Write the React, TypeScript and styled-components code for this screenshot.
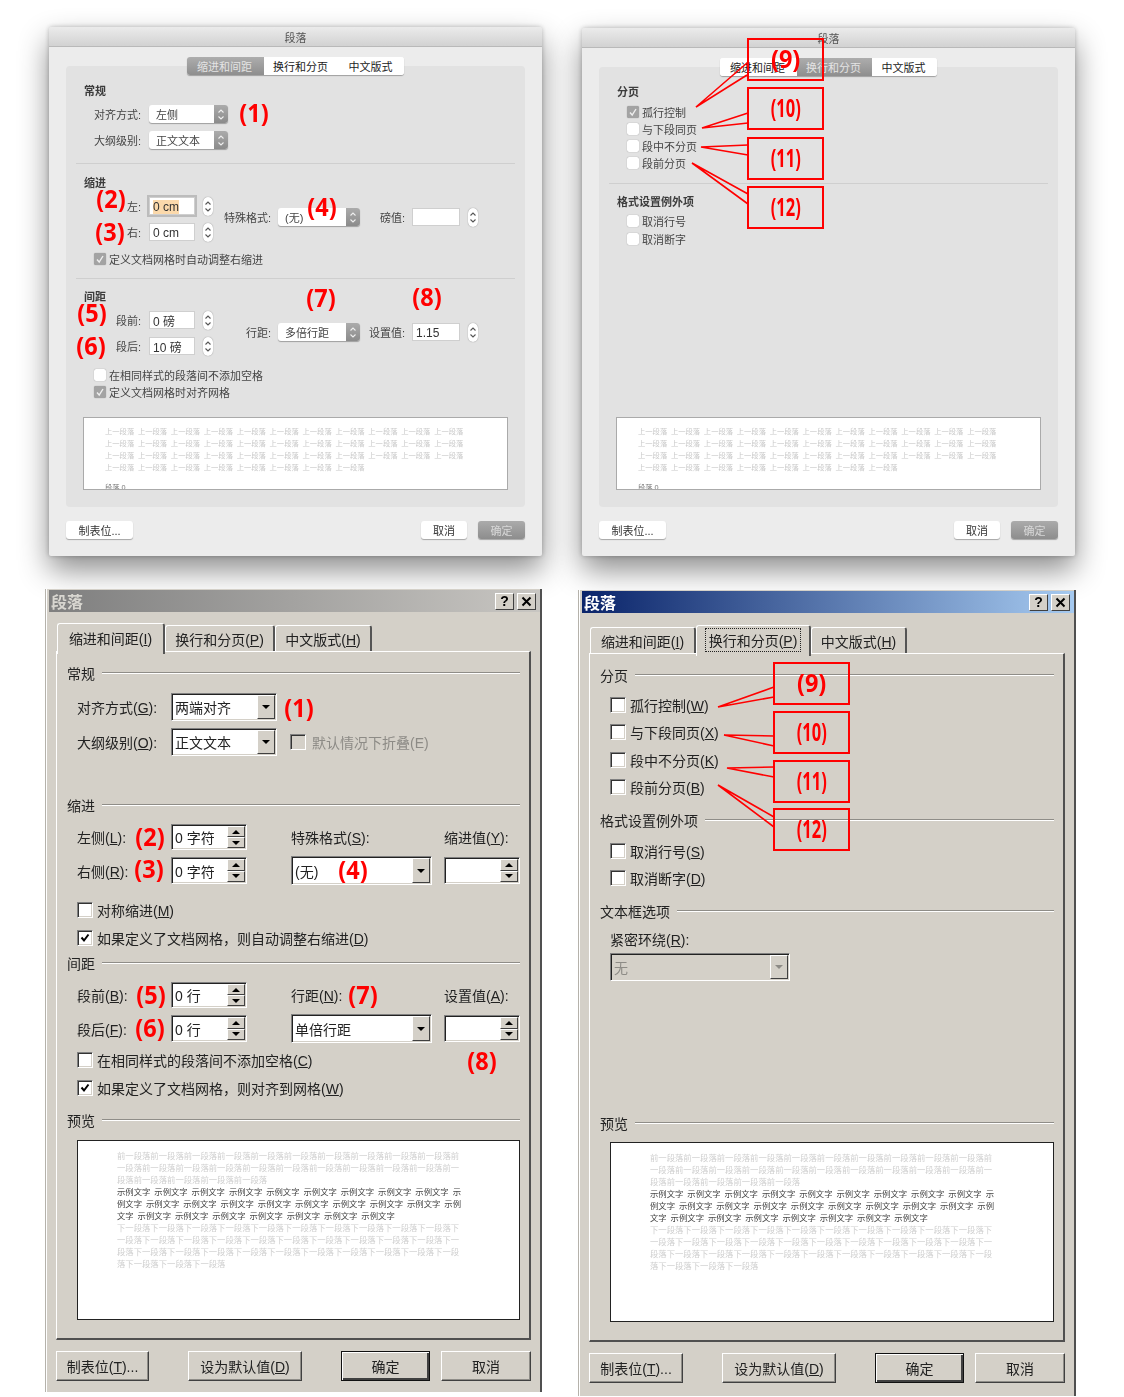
import React from "react";
import styled, { createGlobalStyle } from "styled-components";

const GlobalStyle = createGlobalStyle`
  html, body { margin: 0; padding: 0; background: #fff; }
  body { font-family: "Liberation Sans", "Noto Sans CJK SC", sans-serif; }
  * { box-sizing: border-box; }
`;

const Page = styled.div`
  position: relative;
  width: 1124px;
  height: 1397px;
  overflow: hidden;
  background: #fff;
  padding-top: 27px;
`;

const TopRow = styled.div`
  display: flex;
  align-items: flex-start;
  gap: 40px;
  margin-left: 49px;
`;

const BottomRow = styled.div`
  display: flex;
  align-items: flex-start;
  gap: 36px;
  margin: 33px 0 0 45px;
`;

/* ---- mac dialogs ---- */

const MacDialog = styled.div<{ $top?: number }>`
  width: 493px;
  margin-top: ${(p) => p.$top || 0}px;
  padding-bottom: 17px;
  display: flex;
  flex-direction: column;
  background: #ececec;
  border-radius: 3px 3px 2px 2px;
  box-shadow: 0 14px 30px rgba(0, 0, 0, 0.45), 0 0 5px rgba(0, 0, 0, 0.25);
  filter: blur(0.35px);
  font-size: 11px;
  color: #454545;
`;

const MacTitle = styled.div`
  height: 20px;
  display: flex;
  align-items: center;
  justify-content: center;
  background: linear-gradient(#ebebeb, #d2d2d2);
  border-bottom: 1px solid #b9b9b9;
  border-radius: 3px 3px 0 0;
  color: #555;
`;

const MacTabs = styled.div`
  position: relative;
  z-index: 1;
  align-self: center;
  display: flex;
  height: 18px;
  margin-top: 10px;
  background: #fff;
  border-radius: 3px;
  box-shadow: 0 1px 1px rgba(0, 0, 0, 0.3);
  overflow: hidden;
`;

const MacTab = styled.div<{ $w: number; $active?: boolean }>`
  width: ${(p) => p.$w}px;
  display: flex;
  align-items: center;
  justify-content: center;
  padding: 0 2px 1px 0;
  color: ${(p) => (p.$active ? "#e4e4e4" : "#222")};
  background: ${(p) => (p.$active ? "linear-gradient(#adadad, #8e8e8e)" : "#fff")};
`;

const MacPanel = styled.div`
  margin: -9px 17px 0;
  padding: 18px 10px 17px;
  display: flex;
  flex-direction: column;
  background: #e2e2e2;
  border-radius: 4px;
`;

const MacHead = styled.div<{ $mt?: number }>`
  height: 14px;
  line-height: 14px;
  margin: ${(p) => p.$mt || 0}px 0 0 8px;
  font-weight: 700;
  color: #3c3c3c;
`;

const MacRow = styled.div<{ $mt?: number }>`
  display: flex;
  align-items: center;
  height: 18px;
  margin-top: ${(p) => p.$mt || 0}px;
`;

const MacLabel = styled.span<{ $w: number; $gap: number }>`
  width: ${(p) => p.$w}px;
  margin-right: ${(p) => p.$gap}px;
  padding-bottom: 1px;
  text-align: right;
  white-space: nowrap;
`;

const MacSelectBox = styled.div<{ $w: number }>`
  width: ${(p) => p.$w}px;
  height: 18px;
  display: flex;
  align-items: center;
  justify-content: space-between;
  padding-left: 7px;
  background: #fff;
  border-radius: 3px;
  box-shadow: 0 1px 1px rgba(0, 0, 0, 0.3);
  overflow: hidden;
`;

const MacSelectText = styled.span`
  padding-bottom: 1px;
`;

const MacArrows = styled.div`
  width: 14px;
  height: 18px;
  display: flex;
  align-items: center;
  justify-content: center;
  background: linear-gradient(#ababab, #8b8b8b);
`;

const MacField = styled.div<{ $w: number; $focus?: boolean }>`
  width: ${(p) => p.$w}px;
  height: 18px;
  padding: 1px 0 0 3px;
  display: flex;
  align-items: center;
  background: #fff;
  border: 1px solid #cfcfcf;
  font-size: 12px;
  color: #333;
  box-shadow: ${(p) => (p.$focus ? "0 0 0 2px #bcbcbc" : "none")};
`;

const Highlight = styled.span`
  background: #fbd9ab;
`;

const MacStepper = styled.div`
  width: 10px;
  height: 19px;
  margin-left: 8px;
  display: flex;
  align-items: center;
  justify-content: center;
  background: #fff;
  border-radius: 5px;
  box-shadow: 0 0 1px rgba(0, 0, 0, 0.5);
`;

const MacSplit = styled.div<{ $mt: number }>`
  display: flex;
  align-items: flex-start;
  margin-top: ${(p) => p.$mt}px;
`;

const MacLeftCol = styled.div`
  width: 137px;
  display: flex;
  flex-direction: column;
  gap: 8px;
`;

const MacRightCol = styled.div<{ $mt: number }>`
  margin-top: ${(p) => p.$mt}px;
`;

const MacSep = styled.div<{ $mt: number }>`
  height: 1px;
  margin-top: ${(p) => p.$mt}px;
  background: #cfcfcf;
`;

const MacCheckRow = styled.div<{ $mt: number }>`
  display: flex;
  align-items: center;
  gap: 3px;
  height: 14px;
  margin: ${(p) => p.$mt}px 0 0 18px;
`;

const MacBox = styled.div<{ $on?: boolean }>`
  width: 12px;
  height: 12px;
  display: flex;
  align-items: center;
  justify-content: center;
  border-radius: 2px;
  background: ${(p) => (p.$on ? "#a3a3a3" : "#fff")};
  box-shadow: 0 0 1px rgba(0, 0, 0, 0.45);
`;

const MacPreview = styled.div<{ $mt: number }>`
  width: 425px;
  height: 73px;
  margin: ${(p) => p.$mt}px 0 0 7px;
  padding: 8px 0 0 21px;
  overflow: hidden;
  background: #fff;
  border: 1px solid #aaa;
  font-size: 7.3px;
  line-height: 12px;
`;

const MacPrevText = styled.div`
  width: 366px;
  color: #c9c9c9;
  word-break: keep-all;
  word-spacing: 1.7px;
`;

const MacPrevCurrent = styled.div`
  margin-top: 8px;
  color: #777;
`;

const MacFooter = styled.div`
  display: flex;
  align-items: center;
  gap: 11px;
  margin: 14px 17px 0;
`;

const MacButton = styled.div<{ $w: number; $primary?: boolean; $push?: boolean }>`
  width: ${(p) => p.$w}px;
  height: 18px;
  margin-left: ${(p) => (p.$push ? "auto" : "0")};
  padding-bottom: 1px;
  display: flex;
  align-items: center;
  justify-content: center;
  border-radius: 3px;
  color: ${(p) => (p.$primary ? "#d8d8d8" : "#333")};
  background: ${(p) => (p.$primary ? "linear-gradient(#ababab, #8d8d8d)" : "#fff")};
  box-shadow: 0 1px 1px rgba(0, 0, 0, 0.3);
`;

/* ---- windows dialogs ---- */

const WinDialog = styled.div<{ $w: number; $h: number; $top?: number }>`
  width: ${(p) => p.$w}px;
  height: ${(p) => p.$h}px;
  margin-top: ${(p) => p.$top || 0}px;
  padding: 1px 0 0 3px;
  background: #d4d0c8;
  border-left: 1px solid #b5b2ab;
  border-right: 2px solid #505050;
  box-shadow: inset 1px 0 0 #fff;
  filter: blur(0.25px);
  font-size: 14px;
  color: #222;
`;

const WinTitle = styled.div<{ $active?: boolean }>`
  height: 22px;
  display: flex;
  align-items: center;
  justify-content: space-between;
  padding: 0 3px 0 2px;
  background: ${(p) =>
    p.$active
      ? "linear-gradient(90deg, #0a246a, #a6caf0)"
      : "linear-gradient(90deg, #7f7f7f, #c8c6c2)"};
  color: ${(p) => (p.$active ? "#fff" : "#d8d6d0")};
  font-size: 16px;
  font-weight: 700;
`;

const TitleButtons = styled.div`
  display: flex;
  gap: 3px;
  margin-right: 1px;
`;

const TitleButton = styled.div`
  width: 19px;
  height: 17px;
  display: flex;
  align-items: center;
  justify-content: center;
  background: #d4d0c8;
  border: 1px solid;
  border-color: #fff #404040 #404040 #fff;
  color: #000;
  font: 700 14px "Liberation Sans", sans-serif;
`;

const WinBody = styled.div`
  padding: 0 0 0 7px;
`;

const WinTabs = styled.div<{ $mt: number }>`
  display: flex;
  height: 28px;
  margin-top: ${(p) => p.$mt}px;
  padding-left: 1px;
`;

const WinTab = styled.div<{ $w: number; $active?: boolean }>`
  position: relative;
  z-index: ${(p) => (p.$active ? 1 : 0)};
  width: ${(p) => p.$w}px;
  height: ${(p) => (p.$active ? 31 : 26)}px;
  margin-top: ${(p) => (p.$active ? 0 : 2)}px;
  padding-bottom: ${(p) => (p.$active ? 3 : 0)}px;
  display: flex;
  align-items: center;
  justify-content: center;
  background: #d4d0c8;
  border-top: 1px solid #fff;
  border-left: 1px solid #fff;
  border-right: 2px solid #555;
  border-radius: 3px 3px 0 0;
`;

const FocusText = styled.span`
  padding: 1px 3px;
  outline: 1px dotted #222;
`;

const WinPage = styled.div`
  display: flex;
  flex-direction: column;
  padding: 0 9px 0 10px;
  margin-right: 9px;
  border-top: 1px solid #fff;
  border-left: 1px solid #fff;
  border-right: 2px solid #505050;
  border-bottom: 2px solid #505050;
`;

const WinHead = styled.div<{ $mt: number }>`
  display: flex;
  align-items: center;
  gap: 7px;
  height: 20px;
  margin-top: ${(p) => p.$mt}px;
`;

const HeadRule = styled.div`
  flex: 1;
  height: 2px;
  background: #8f8d88;
  border-bottom: 1px solid #fff;
`;

const WinRow = styled.div<{ $mt: number }>`
  display: flex;
  align-items: center;
  height: 28px;
  margin: ${(p) => p.$mt}px 0 0 10px;
`;

const WinLabel = styled.span<{ $w?: number }>`
  width: ${(p) => (p.$w ? `${p.$w}px` : "auto")};
  white-space: nowrap;
`;

const Sunken = styled.div<{ $w: number; $h?: number; $disabled?: boolean }>`
  width: ${(p) => p.$w}px;
  height: ${(p) => (p.$h ? `${p.$h}px` : "100%")};
  flex: none;
  display: flex;
  align-items: center;
  padding-left: 3px;
  background: ${(p) => (p.$disabled ? "#d4d0c8" : "#fff")};
  color: ${(p) => (p.$disabled ? "#8d8b86" : "#222")};
  border: 1px solid;
  border-color: #808080 #fff #fff #808080;
  box-shadow: inset 1px 1px 0 #222, inset -1px -1px 0 #d4d0c8;
`;

const DropButton = styled.div`
  width: 18px;
  height: calc(100% - 2px);
  margin: 0 1px 0 auto;
  display: flex;
  align-items: center;
  justify-content: center;
  background: #d4d0c8;
  border: 1px solid;
  border-color: #fff #404040 #404040 #fff;
`;

const ArrowDown = styled.i<{ $muted?: boolean }>`
  width: 0;
  height: 0;
  border-left: 4px solid transparent;
  border-right: 4px solid transparent;
  border-top: 4px solid ${(p) => (p.$muted ? "#8d8b86" : "#000")};
`;

const ArrowUp = styled.i`
  width: 0;
  height: 0;
  border-left: 4px solid transparent;
  border-right: 4px solid transparent;
  border-bottom: 4px solid #000;
`;

const SpinColumn = styled.div`
  width: 18px;
  height: calc(100% - 2px);
  margin: 0 1px 0 auto;
  display: flex;
  flex-direction: column;
`;

const SpinPart = styled.div`
  flex: 1;
  display: flex;
  align-items: center;
  justify-content: center;
  background: #d4d0c8;
  border: 1px solid;
  border-color: #fff #404040 #404040 #fff;
`;

const MetricGrid = styled.div<{ $mt: number }>`
  display: grid;
  grid-template-columns: 94px 76px 44px 141px 12px 76px;
  grid-template-rows: 26px 27px;
  row-gap: 7px;
  align-items: center;
  margin: ${(p) => p.$mt}px 0 0 10px;
`;

const Gap = styled.span``;

const WinCheckRow = styled.div<{ $mt: number }>`
  display: flex;
  align-items: center;
  gap: 4px;
  height: 16px;
  margin: ${(p) => p.$mt}px 0 0 10px;
  white-space: nowrap;
`;

const WinBox = styled.div<{ $disabled?: boolean }>`
  width: 16px;
  height: 16px;
  flex: none;
  margin-left: ${(p) => (p.$disabled ? 13 : 0)}px;
  display: flex;
  align-items: center;
  justify-content: center;
  background: ${(p) => (p.$disabled ? "#d4d0c8" : "#fff")};
  border: 1px solid;
  border-color: #808080 #fff #fff #808080;
  box-shadow: inset 1px 1px 0 #333, inset -1px -1px 0 #d4d0c8;
`;

const MutedText = styled.span`
  margin-left: 6px;
  color: #8d8b86;
`;

const WinPreview = styled.div<{ $mt: number }>`
  height: 180px;
  margin: ${(p) => p.$mt}px 0 18px 10px;
  padding: 9px 0 0 39px;
  background: #fff;
  border: 1px solid #222;
  font-size: 8.35px;
  line-height: 12px;
`;

const PrevBlock = styled.div<{ $dark?: boolean }>`
  width: 344px;
  color: ${(p) => (p.$dark ? "#444" : "#cfcfcf")};
  word-spacing: ${(p) => (p.$dark ? 1.6 : 0)}px;
`;

const WinFooter = styled.div`
  display: flex;
  gap: 39px;
  margin-top: 11px;
`;

const WinFooterEnd = styled.div`
  display: flex;
  gap: 11px;
`;

const WinButton = styled.div<{ $w: number; $default?: boolean }>`
  width: ${(p) => p.$w}px;
  height: 30px;
  display: flex;
  align-items: center;
  justify-content: center;
  background: #d4d0c8;
  border: 1px solid;
  border-color: ${(p) => (p.$default ? "#111" : "#fff #404040 #404040 #fff")};
  box-shadow: ${(p) =>
    p.$default
      ? "inset 1px 1px 0 #fff, inset -2px -2px 0 #404040"
      : "inset -1px -1px 0 #8f8d88"};
`;

/* ---- annotations ---- */

const Callouts = styled.svg`
  position: absolute;
  left: 0;
  top: 0;
  pointer-events: none;
`;

const Mark = styled.div<{ $x: number; $y: number }>`
  position: absolute;
  left: ${(p) => p.$x}px;
  top: ${(p) => p.$y}px;
  transform: translate(-50%, -56%) scaleX(0.94);
  font: 700 25px/1 "Open Sans", sans-serif;
  color: #f00;
  white-space: nowrap;
`;

const NoteBox = styled.div<{ $x: number; $y: number }>`
  position: absolute;
  left: ${(p) => p.$x}px;
  top: ${(p) => p.$y}px;
  width: 77px;
  height: 43px;
  padding-bottom: 2px;
  display: flex;
  align-items: center;
  justify-content: center;
  border: 2px solid #f00;
  font: 700 25px/1 "Open Sans", sans-serif;
  color: #f00;
`;

const NoteNumber = styled.span<{ $narrow?: boolean }>`
  display: block;
  transform: scaleX(${(p) => (p.$narrow ? 0.66 : 0.94)});
`;

const U = styled.span`
  text-decoration: underline;
  text-underline-offset: 1px;
`;

const Chevrons = ({ color }: { color: string }) => (
  <svg width="8" height="13" viewBox="0 0 8 13" fill="none" stroke={color} strokeWidth="1.1">
    <path d="M1.5 4.5 L4 2 L6.5 4.5" />
    <path d="M1.5 8.5 L4 11 L6.5 8.5" />
  </svg>
);

const MacTick = () => (
  <svg width="10" height="10" viewBox="0 0 10 10" fill="none" stroke="#eee" strokeWidth="1.4">
    <path d="M2 5.5 L4.2 8 L8 2" />
  </svg>
);

const MacSelect = ({ w, text }: { w: number; text: string }) => (
  <MacSelectBox $w={w}>
    <MacSelectText>{text}</MacSelectText>
    <MacArrows>
      <Chevrons color="#eee" />
    </MacArrows>
  </MacSelectBox>
);

const MacCheck = ({ mt, on, text }: { mt: number; on?: boolean; text: string }) => (
  <MacCheckRow $mt={mt}>
    <MacBox $on={on}>{on && <MacTick />}</MacBox>
    {text}
  </MacCheckRow>
);

const MacStep = () => (
  <MacStepper>
    <Chevrons color="#555" />
  </MacStepper>
);

const MacTabStrip = ({ active }: { active: number }) => (
  <MacTabs>
    {[
      ["缩进和间距", 77],
      ["换行和分页", 75],
      ["中文版式", 65],
    ].map(([t, w], i) => (
      <MacTab key={t} $w={w as number} $active={i === active}>
        {t}
      </MacTab>
    ))}
  </MacTabs>
);

const MacPreviewBox = ({ mt }: { mt: number }) => (
  <MacPreview $mt={mt}>
    <MacPrevText>{Array(41).fill("上一段落").join(" ")}</MacPrevText>
    <MacPrevCurrent>段落 0</MacPrevCurrent>
  </MacPreview>
);

const MacButtons = () => (
  <MacFooter>
    <MacButton $w={67}>制表位...</MacButton>
    <MacButton $w={46} $push>
      取消
    </MacButton>
    <MacButton $w={47} $primary>
      确定
    </MacButton>
  </MacFooter>
);

const MacMetric = ({ label, value, focus }: { label: string; value: React.ReactNode; focus?: boolean }) => (
  <MacRow>
    <MacLabel $w={65} $gap={8}>
      {label}
    </MacLabel>
    <MacField $w={46} $focus={focus}>
      {value}
    </MacField>
    <MacStep />
  </MacRow>
);

const MacIndentDialog = () => (
  <MacDialog>
    <MacTitle>段落</MacTitle>
    <MacTabStrip active={0} />
    <MacPanel>
      <MacHead>常规</MacHead>
      <MacRow $mt={7}>
        <MacLabel $w={65} $gap={8}>
          对齐方式:
        </MacLabel>
        <MacSelect w={79} text="左侧" />
      </MacRow>
      <MacRow $mt={8}>
        <MacLabel $w={65} $gap={8}>
          大纲级别:
        </MacLabel>
        <MacSelect w={79} text="正文文本" />
      </MacRow>
      <MacSep $mt={14} />
      <MacHead $mt={12}>缩进</MacHead>
      <MacSplit $mt={7}>
        <MacLeftCol>
          <MacMetric label="左:" value={<Highlight>0 cm</Highlight>} focus />
          <MacMetric label="右:" value="0 cm" />
        </MacLeftCol>
        <MacRightCol $mt={11}>
          <MacRow>
            <MacLabel $w={58} $gap={7}>
              特殊格式:
            </MacLabel>
            <MacSelect w={82} text="(无)" />
            <MacLabel $w={45} $gap={7}>
              磅值:
            </MacLabel>
            <MacField $w={48} />
            <MacStep />
          </MacRow>
        </MacRightCol>
      </MacSplit>
      <MacCheck mt={11} on text="定义文档网格时自动调整右缩进" />
      <MacSep $mt={12} />
      <MacHead $mt={11}>间距</MacHead>
      <MacSplit $mt={7}>
        <MacLeftCol>
          <MacMetric label="段前:" value="0 磅" />
          <MacMetric label="段后:" value="10 磅" />
        </MacLeftCol>
        <MacRightCol $mt={12}>
          <MacRow>
            <MacLabel $w={58} $gap={7}>
              行距:
            </MacLabel>
            <MacSelect w={82} text="多倍行距" />
            <MacLabel $w={45} $gap={7}>
              设置值:
            </MacLabel>
            <MacField $w={48}>1.15</MacField>
            <MacStep />
          </MacRow>
        </MacRightCol>
      </MacSplit>
      <MacCheck mt={13} text="在相同样式的段落间不添加空格" />
      <MacCheck mt={3} on text="定义文档网格时对齐网格" />
      <MacPreviewBox mt={18} />
    </MacPanel>
    <MacButtons />
  </MacDialog>
);

const MacBreaksDialog = () => (
  <MacDialog $top={1}>
    <MacTitle>段落</MacTitle>
    <MacTabStrip active={1} />
    <MacPanel>
      <MacHead>分页</MacHead>
      <MacCheck mt={6} on text="孤行控制" />
      <MacCheck mt={3} text="与下段同页" />
      <MacCheck mt={3} text="段中不分页" />
      <MacCheck mt={3} text="段前分页" />
      <MacSep $mt={13} />
      <MacHead $mt={11}>格式设置例外项</MacHead>
      <MacCheck mt={5} text="取消行号" />
      <MacCheck mt={4} text="取消断字" />
      <MacPreviewBox mt={171} />
    </MacPanel>
    <MacButtons />
  </MacDialog>
);

const WinTick = () => (
  <svg width="12" height="12" viewBox="0 0 12 12" fill="none" stroke="#000" strokeWidth="2">
    <path d="M2.5 5.5 L5 8.5 L9.5 2.5" />
  </svg>
);

const WinCheck = ({ mt, on, children }: { mt: number; on?: boolean; children: React.ReactNode }) => (
  <WinCheckRow $mt={mt}>
    <WinBox>{on && <WinTick />}</WinBox>
    <span>{children}</span>
  </WinCheckRow>
);

const WinSelect = ({ w, h, text, disabled }: { w: number; h?: number; text: string; disabled?: boolean }) => (
  <Sunken $w={w} $h={h} $disabled={disabled}>
    {text}
    <DropButton>
      <ArrowDown $muted={disabled} />
    </DropButton>
  </Sunken>
);

const WinSpin = ({ text }: { text?: string }) => (
  <Sunken $w={76}>
    {text}
    <SpinColumn>
      <SpinPart>
        <ArrowUp />
      </SpinPart>
      <SpinPart>
        <ArrowDown />
      </SpinPart>
    </SpinColumn>
  </Sunken>
);

const WinHeading = ({ mt, text }: { mt: number; text: string }) => (
  <WinHead $mt={mt}>
    {text}
    <HeadRule />
  </WinHead>
);

const WinFrame = ({ active }: { active?: boolean }) => (
  <WinTitle $active={active}>
    段落
    <TitleButtons>
      <TitleButton>?</TitleButton>
      <TitleButton>
        <svg width="11" height="11" viewBox="0 0 11 11" stroke="#000" strokeWidth="2">
          <path d="M1.5 1.5 L9.5 9.5 M9.5 1.5 L1.5 9.5" />
        </svg>
      </TitleButton>
    </TitleButtons>
  </WinTitle>
);

const WinPreviewBox = ({ mt }: { mt: number }) => (
  <WinPreview $mt={mt}>
    <PrevBlock>{"前一段落".repeat(25)}</PrevBlock>
    <PrevBlock $dark>{Array(26).fill("示例文字").join(" ")}</PrevBlock>
    <PrevBlock>{"下一段落".repeat(34)}</PrevBlock>
  </WinPreview>
);

const WinButtons = ({ first }: { first: number }) => (
  <WinFooter>
    <WinButton $w={first}>
      <span>
        制表位(<U>T</U>)...
      </span>
    </WinButton>
    <WinButton $w={114}>
      <span>
        设为默认值(<U>D</U>)
      </span>
    </WinButton>
    <WinFooterEnd>
      <WinButton $w={89} $default>
        确定
      </WinButton>
      <WinButton $w={90}>取消</WinButton>
    </WinFooterEnd>
  </WinFooter>
);

const WinIndentDialog = () => (
  <WinDialog $w={497} $h={803}>
    <WinFrame />
    <WinBody>
      <WinTabs $mt={11}>
        <WinTab $w={108} $active>
          <span>
            缩进和间距(<U>I</U>)
          </span>
        </WinTab>
        <WinTab $w={110}>
          <span>
            换行和分页(<U>P</U>)
          </span>
        </WinTab>
        <WinTab $w={97}>
          <span>
            中文版式(<U>H</U>)
          </span>
        </WinTab>
      </WinTabs>
      <WinPage>
        <WinHeading mt={11} text="常规" />
        <WinRow $mt={10}>
          <WinLabel $w={94}>
            对齐方式(<U>G</U>):
          </WinLabel>
          <WinSelect w={106} text="两端对齐" />
        </WinRow>
        <WinRow $mt={7}>
          <WinLabel $w={94}>
            大纲级别(<U>O</U>):
          </WinLabel>
          <WinSelect w={106} text="正文文本" />
          <WinBox $disabled />
          <MutedText>默认情况下折叠(E)</MutedText>
        </WinRow>
        <WinHeading mt={39} text="缩进" />
        <MetricGrid $mt={9}>
          <WinLabel>
            左侧(<U>L</U>):
          </WinLabel>
          <WinSpin text="0 字符" />
          <Gap />
          <WinLabel>
            特殊格式(<U>S</U>):
          </WinLabel>
          <Gap />
          <WinLabel>
            缩进值(<U>Y</U>):
          </WinLabel>
          <WinLabel>
            右侧(<U>R</U>):
          </WinLabel>
          <WinSpin text="0 字符" />
          <Gap />
          <WinSelect w={141} h={29} text="(无)" />
          <Gap />
          <WinSpin />
        </MetricGrid>
        <WinCheck mt={18}>
          对称缩进(<U>M</U>)
        </WinCheck>
        <WinCheck mt={12} on>
          如果定义了文档网格，则自动调整右缩进(<U>D</U>)
        </WinCheck>
        <WinHeading mt={7} text="间距" />
        <MetricGrid $mt={9}>
          <WinLabel>
            段前(<U>B</U>):
          </WinLabel>
          <WinSpin text="0 行" />
          <Gap />
          <WinLabel>
            行距(<U>N</U>):
          </WinLabel>
          <Gap />
          <WinLabel>
            设置值(<U>A</U>):
          </WinLabel>
          <WinLabel>
            段后(<U>F</U>):
          </WinLabel>
          <WinSpin text="0 行" />
          <Gap />
          <WinSelect w={141} h={29} text="单倍行距" />
          <Gap />
          <WinSpin />
        </MetricGrid>
        <WinCheck mt={10}>
          在相同样式的段落间不添加空格(<U>C</U>)
        </WinCheck>
        <WinCheck mt={12} on>
          如果定义了文档网格，则对齐到网格(<U>W</U>)
        </WinCheck>
        <WinHeading mt={14} text="预览" />
        <WinPreviewBox mt={10} />
      </WinPage>
      <WinButtons first={93} />
    </WinBody>
  </WinDialog>
);

const WinBreaksDialog = () => (
  <WinDialog $w={498} $h={806} $top={1}>
    <WinFrame active />
    <WinBody>
      <WinTabs $mt={12}>
        <WinTab $w={106}>
          <span>
            缩进和间距(<U>I</U>)
          </span>
        </WinTab>
        <WinTab $w={115} $active>
          <FocusText>
            换行和分页(<U>P</U>)
          </FocusText>
        </WinTab>
        <WinTab $w={96}>
          <span>
            中文版式(<U>H</U>)
          </span>
        </WinTab>
      </WinTabs>
      <WinPage>
        <WinHeading mt={11} text="分页" />
        <WinCheck mt={12}>
          孤行控制(<U>W</U>)
        </WinCheck>
        <WinCheck mt={11}>
          与下段同页(<U>X</U>)
        </WinCheck>
        <WinCheck mt={12}>
          段中不分页(<U>K</U>)
        </WinCheck>
        <WinCheck mt={11}>
          段前分页(<U>B</U>)
        </WinCheck>
        <WinHeading mt={15} text="格式设置例外项" />
        <WinCheck mt={13}>
          取消行号(<U>S</U>)
        </WinCheck>
        <WinCheck mt={11}>
          取消断字(<U>D</U>)
        </WinCheck>
        <WinHeading mt={15} text="文本框选项" />
        <WinCheckRow $mt={10}>
          <span>
            紧密环绕(<U>R</U>):
          </span>
        </WinCheckRow>
        <WinRow $mt={6}>
          <WinSelect w={180} text="无" disabled />
        </WinRow>
        <WinHeading mt={132} text="预览" />
        <WinPreviewBox mt={9} />
      </WinPage>
      <WinButtons first={94} />
    </WinBody>
  </WinDialog>
);

const marks: [string, number, number][] = [
  ["(1)", 254, 114],
  ["(2)", 111, 200],
  ["(3)", 110, 233],
  ["(4)", 322, 208],
  ["(5)", 92, 314],
  ["(6)", 91, 347],
  ["(7)", 321, 299],
  ["(8)", 427, 298],
  ["(1)", 299, 709],
  ["(2)", 150, 838],
  ["(3)", 149, 870],
  ["(4)", 353, 871],
  ["(5)", 151, 996],
  ["(6)", 150, 1029],
  ["(7)", 363, 996],
  ["(8)", 482, 1062],
];

const notes: [string, number, number][] = [
  ["(9)", 747, 38],
  ["(10)", 747, 87],
  ["(11)", 747, 137],
  ["(12)", 747, 186],
  ["(9)", 773, 662],
  ["(10)", 773, 711],
  ["(11)", 773, 760],
  ["(12)", 773, 808],
];

const wedges = [
  "747,63 696,107 747,75",
  "748,113 702,128 748,123",
  "748,145 701,147 748,155",
  "748,194 692,163 748,204",
  "774,687 718,707 774,697",
  "774,736 724,735 774,746",
  "774,767 727,768 774,777",
  "774,817 718,785 774,827",
];

export default function App() {
  return (
    <Page>
      <GlobalStyle />
      <TopRow>
        <MacIndentDialog />
        <MacBreaksDialog />
      </TopRow>
      <BottomRow>
        <WinIndentDialog />
        <WinBreaksDialog />
      </BottomRow>
      <Callouts width="1124" height="1397" fill="none" stroke="#f00" strokeWidth="1.6">
        {wedges.map((points) => (
          <polyline key={points} points={points} />
        ))}
      </Callouts>
      {marks.map(([text, x, y]) => (
        <Mark key={`${text}${y}`} $x={x} $y={y}>
          {text}
        </Mark>
      ))}
      {notes.map(([text, x, y]) => (
        <NoteBox key={`${text}${y}`} $x={x} $y={y}>
          <NoteNumber $narrow={text.length > 3}>{text}</NoteNumber>
        </NoteBox>
      ))}
    </Page>
  );
}
